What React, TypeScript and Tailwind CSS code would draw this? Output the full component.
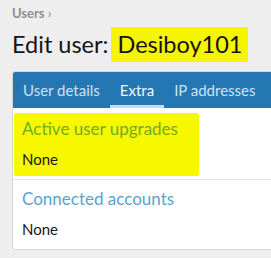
export default function App() {
  const font = { fontFamily: 'Lato, "Noto Sans", sans-serif' };
  return (
    <div
      className="w-[271px] h-[258px] overflow-hidden bg-[#eeeeee] pl-3 pt-[4px]"
      style={font}
    >
      <div className="text-[13px] leading-[18px] font-bold text-[#8f8f8f]">
        Users <span className="font-normal">›</span>
      </div>
      <h1 className="mt-[5px] flex items-center text-[23.5px] leading-[35px] text-[#141414]">
        <span>Edit user:</span>
        <span className="ml-[3px] bg-[#f5f500] px-[6px]">Desiboy101</span>
      </h1>
      <div className="mt-[9px] w-[290px] overflow-hidden rounded-[3px] border border-[#d6d6d6] bg-white">
        <div className="flex h-[36px] bg-[#2577b3] pl-[9px] text-[15px]">
          <div className="flex items-center px-[1px] text-[#cfe0ee]">User details</div>
          <div className="ml-[9px] flex items-center border-b-[3px] border-[#c7dbea] px-[10px] pt-[3px] text-[#f2f7fb]">
            Extra
          </div>
          <div className="ml-[10px] flex items-center text-[#cfe0ee]">IP addresses</div>
        </div>
        <div className="ml-[1px] mt-[5px] w-[185px] rounded-[2px] bg-[#f7f700] pl-[8px] pt-[4px] pb-[7px]">
          <div className="text-[17px] leading-[24px] text-[#70ae20]">Active user upgrades</div>
          <div className="mt-[8px] text-[15px] leading-[20px] text-[#1a1a1a]">None</div>
        </div>
        <div className="mt-[3px] border-t border-[#e2e2e2] pl-[9px] pt-[7px] pb-[10px]">
          <div className="text-[17px] leading-[24px] text-[#5ba2d2]">Connected accounts</div>
          <div className="mt-[8px] text-[15px] leading-[20px] text-[#1a1a1a]">None</div>
        </div>
      </div>
    </div>
  );
}
